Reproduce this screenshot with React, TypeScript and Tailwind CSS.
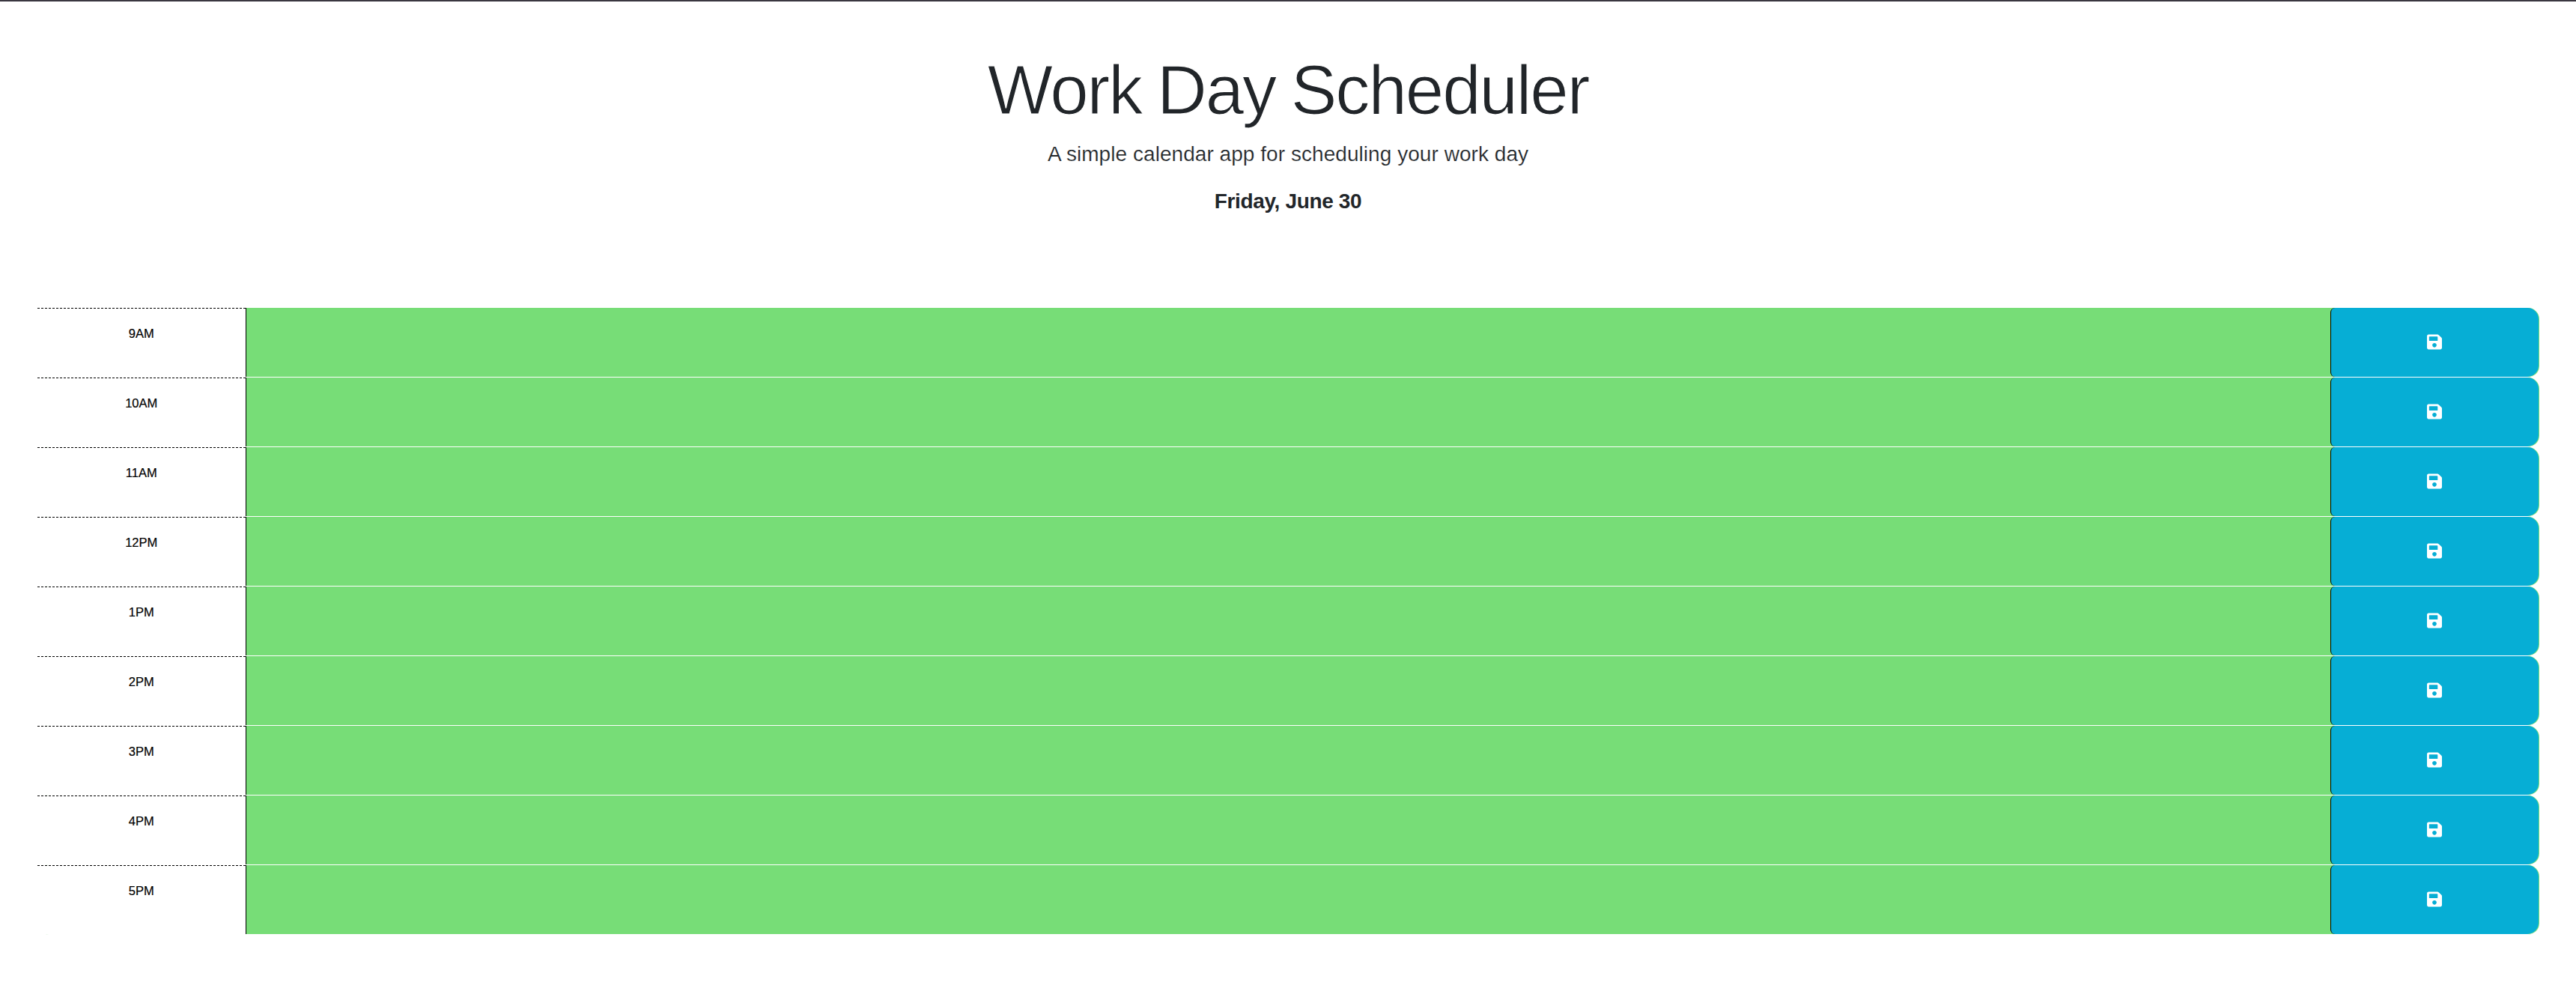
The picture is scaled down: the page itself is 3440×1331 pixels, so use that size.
import React from "react";
import { FaSave } from "react-icons/fa";

const hours = ["9AM", "10AM", "11AM", "12PM", "1PM", "2PM", "3PM", "4PM", "5PM"];

function TimeBlock({ hour }: { hour: string }) {
  return (
    <div className="flex h-[93px] rounded-[15px] border-b border-white bg-[#77dd77]">
      <div className="w-1/12 border-t border-dashed border-black bg-white pt-[23px] text-center text-[16.5px] leading-[20px] text-black [-webkit-text-stroke:0.2px_black]">
        {hour}
      </div>
      <div className="w-10/12 border-l border-black" />
      <button
        aria-label="save"
        className="flex w-1/12 items-center justify-center rounded-l-[6px] rounded-r-[15px] border-l border-black bg-[#06aed5] pr-[2px] pb-px text-white"
      >
        <FaSave className="h-[23px] w-[20px]" />
      </button>
    </div>
  );
}

export default function App() {
  return (
    <div className="h-[1331px] overflow-hidden border-t-2 border-[#3a3740] bg-white font-['Liberation_Sans',sans-serif] text-[#212529]">
      <header className="flex h-[409px] flex-col items-center pt-[64px] whitespace-nowrap">
        <h1 className="text-[92.5px] leading-[108px] tracking-[-2.1px] [word-spacing:-3px] [-webkit-text-stroke:1.2px_white]">
          Work Day Scheduler
        </h1>
        <p className="mt-[16px] text-[28px] leading-[32px] tracking-[0.05px] [-webkit-text-stroke:0.2px_white]">
          A simple calendar app for scheduling your work day
        </p>
        <p className="mt-[31px] text-[28px] leading-[32px] font-bold tracking-[-0.35px]">Friday, June 30</p>
      </header>
      <main className="mx-[49.5px]">
        {hours.map((hour) => (
          <TimeBlock key={hour} hour={hour} />
        ))}
      </main>
    </div>
  );
}
